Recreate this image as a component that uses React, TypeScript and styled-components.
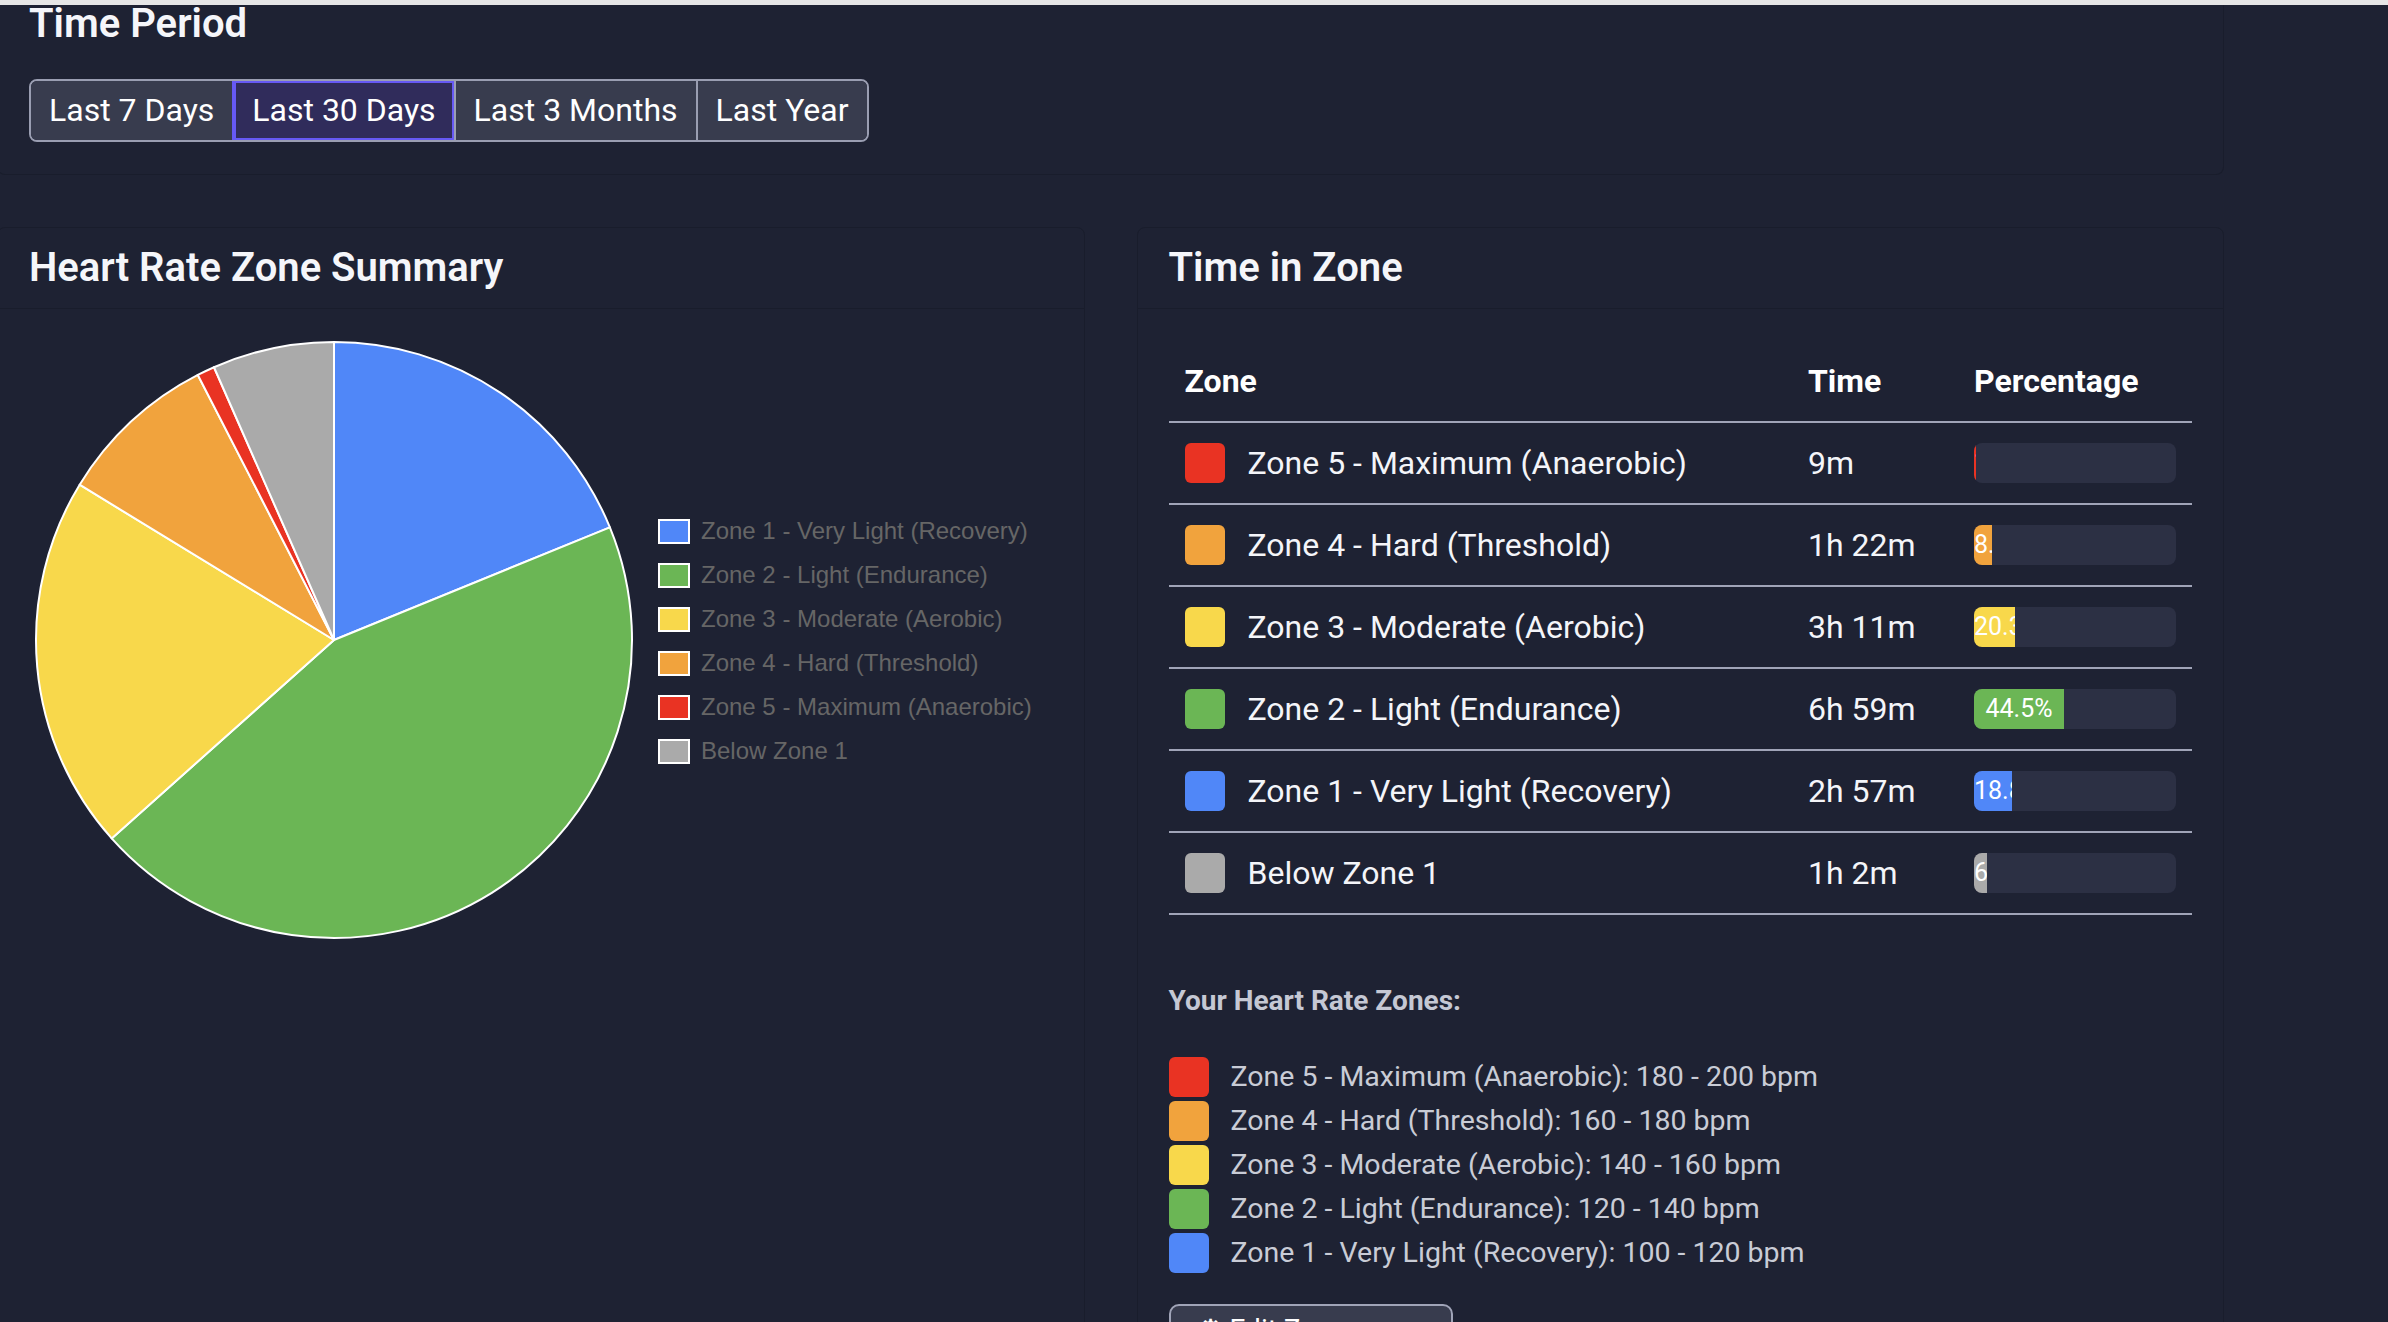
import React from "react";
import styled, { createGlobalStyle } from "styled-components";

const GlobalStyle = createGlobalStyle`
  html, body {
    margin: 0;
    padding: 0;
    overflow: hidden;
    background: #1e2233;
  }
  body {
    font-family: Roboto, Inter, "Liberation Sans", sans-serif;
    color: #f4f5f9;
  }
  * { box-sizing: border-box; }
`;

type Zone = {
  key: string;
  name: string;
  color: string;
  minutes: number;
  time: string;
  pct: string;
  range: string;
};

const ZONES: Zone[] = [
  { key: "z5", name: "Zone 5 - Maximum (Anaerobic)", color: "#e93323", minutes: 9, time: "9m", pct: "1.0%", range: "180 - 200 bpm" },
  { key: "z4", name: "Zone 4 - Hard (Threshold)", color: "#f1a33d", minutes: 82, time: "1h 22m", pct: "8.7%", range: "160 - 180 bpm" },
  { key: "z3", name: "Zone 3 - Moderate (Aerobic)", color: "#f8d84b", minutes: 191, time: "3h 11m", pct: "20.3%", range: "140 - 160 bpm" },
  { key: "z2", name: "Zone 2 - Light (Endurance)", color: "#6bb655", minutes: 419, time: "6h 59m", pct: "44.5%", range: "120 - 140 bpm" },
  { key: "z1", name: "Zone 1 - Very Light (Recovery)", color: "#5087f8", minutes: 177, time: "2h 57m", pct: "18.8%", range: "100 - 120 bpm" },
  { key: "z0", name: "Below Zone 1", color: "#aaaaaa", minutes: 62, time: "1h 2m", pct: "6.6%", range: "" },
];

const TOTAL = ZONES.reduce((s, z) => s + z.minutes, 0);
const byKey = (k: string) => ZONES.find((z) => z.key === k)!;
const PIE_ORDER = ["z1", "z2", "z3", "z4", "z5", "z0"].map(byKey);

const TopStrip = styled.div`
  height: 5px;
  background: #e6e6e6;
`;

const Page = styled.div`
  width: 2227px;
  margin-left: -3px;
  display: flex;
  flex-direction: column;
  gap: 52px;
`;

const Card = styled.section`
  border: 1px solid #191d2c;
  border-radius: 8px;
  background: #1e2233;
`;

const PeriodCard = styled(Card)`
  border-top: none;
  border-radius: 0 0 8px 8px;
  padding: 0 31px 32px;
`;

const Heading = styled.h2`
  margin: 0;
  font-size: 40px;
  font-weight: 600;
  line-height: 38px;
  color: #f5f6fa;
`;

const ButtonGroup = styled.div`
  margin-top: 36px;
  display: inline-flex;
  border: 2px solid #9a9eb2;
  border-radius: 8px;
  overflow: hidden;
`;

const PeriodButton = styled.button<{ $active?: boolean }>`
  font-family: inherit;
  font-size: 32px;
  line-height: 40px;
  color: #ffffff;
  padding: 9px 18px 10px;
  margin: 0;
  background: ${(p) => (p.$active ? "#302c5b" : "#383c4e")};
  border: none;
  border-left: 2px solid ${(p) => (p.$active ? "#6659f4" : "#9a9eb2")};
  box-shadow: ${(p) => (p.$active ? "inset 0 0 0 2px #6659f4" : "none")};
  &:first-child {
    border-left: none;
  }
`;

const Grid = styled.div`
  display: grid;
  grid-template-columns: 1fr 1fr;
  gap: 52px;
`;

const CardHeader = styled.header`
  padding: 16px 31px;
  border-bottom: 1px solid #191d2c;
`;

const CardTitle = styled.h2`
  margin: 0;
  font-size: 40px;
  font-weight: 600;
  line-height: 48px;
  color: #f5f6fa;
`;

const ChartBody = styled.div`
  padding: 32px 31px;
  display: flex;
  align-items: center;
`;

const Legend = styled.ul`
  list-style: none;
  margin: 0 0 0 19px;
  padding: 0;
  display: flex;
  flex-direction: column;
  gap: 19px;
  font-family: "Liberation Sans", Arial, Helvetica, sans-serif;
  font-size: 24px;
  color: #666666;
`;

const LegendItem = styled.li`
  display: flex;
  align-items: center;
  gap: 11px;
  height: 25px;
`;

const LegendBox = styled.span<{ $color: string }>`
  width: 32px;
  height: 25px;
  background: ${(p) => p.$color};
  border: 2px solid #ffffff;
`;

const TableBody = styled.div`
  padding: 32px 31px 32px;
`;

const Table = styled.table`
  width: 100%;
  border-collapse: collapse;
`;

const Th = styled.th<{ $w?: number }>`
  text-align: left;
  font-size: 32px;
  font-weight: 700;
  line-height: 48px;
  padding: 16px;
  color: #ffffff;
  border-bottom: 2px solid #a0a4b8;
  width: ${(p) => (p.$w ? `${p.$w}px` : "auto")};
`;

const Td = styled.td`
  font-size: 32px;
  line-height: 48px;
  padding: 16px;
  color: #f4f5f9;
  border-bottom: 2px solid #a0a4b8;
  white-space: nowrap;
`;

const ZoneLabel = styled.div`
  display: flex;
  align-items: center;
  gap: 23px;
`;

const Swatch = styled.span<{ $color: string }>`
  flex: none;
  width: 40px;
  height: 40px;
  border-radius: 6px;
  background: ${(p) => p.$color};
`;

const Track = styled.div`
  width: 202px;
  height: 40px;
  border-radius: 8px;
  background: #2c3044;
  overflow: hidden;
`;

const Fill = styled.div<{ $color: string }>`
  height: 100%;
  background: ${(p) => p.$color};
  color: #ffffff;
  font-size: 25px;
  line-height: 40px;
  text-align: center;
  white-space: nowrap;
  overflow: hidden;
`;

const ZonesHeading = styled.h4`
  margin: 69px 0 0;
  font-size: 28px;
  font-weight: 700;
  line-height: 34px;
  color: #c5c8d4;
`;

const ZoneList = styled.ul`
  list-style: none;
  margin: 39px 0 0;
  padding: 0;
  display: flex;
  flex-direction: column;
  gap: 4px;
`;

const ZoneRow = styled.li`
  display: flex;
  align-items: center;
  gap: 22px;
  font-size: 28.5px;
  line-height: 40px;
  color: #c9ccd6;
`;

const ActionButton = styled.button`
  margin-top: 31px;
  width: 284px;
  font-family: inherit;
  font-size: 28px;
  line-height: 34px;
  text-align: left;
  color: #ffffff;
  padding: 7px 27px 12px;
  background: #383c4e;
  border: 2px solid #a0a4b8;
  border-radius: 10px;
`;

function PieChart() {
  const cx = 305;
  const cy = 299;
  const r = 298;
  let acc = 0;
  const slices = PIE_ORDER.map((z) => {
    const start = (acc / TOTAL) * Math.PI * 2 - Math.PI / 2;
    acc += z.minutes;
    const end = (acc / TOTAL) * Math.PI * 2 - Math.PI / 2;
    const x1 = cx + r * Math.cos(start);
    const y1 = cy + r * Math.sin(start);
    const x2 = cx + r * Math.cos(end);
    const y2 = cy + r * Math.sin(end);
    const large = end - start > Math.PI ? 1 : 0;
    const d = `M ${cx} ${cy} L ${x1} ${y1} A ${r} ${r} 0 ${large} 1 ${x2} ${y2} Z`;
    return <path key={z.key} d={d} fill={z.color} stroke="#ffffff" strokeWidth={2} strokeLinejoin="round" />;
  });
  return (
    <svg width={610} height={600} viewBox="0 0 610 600">
      {slices}
    </svg>
  );
}

export default function App() {
  const periods = ["Last 7 Days", "Last 30 Days", "Last 3 Months", "Last Year"];
  return (
    <>
      <GlobalStyle />
      <TopStrip />
      <Page>
        <PeriodCard>
          <Heading>Time Period</Heading>
          <ButtonGroup>
            {periods.map((p) => (
              <PeriodButton key={p} $active={p === "Last 30 Days"}>
                {p}
              </PeriodButton>
            ))}
          </ButtonGroup>
        </PeriodCard>
        <Grid>
          <Card>
            <CardHeader>
              <CardTitle>Heart Rate Zone Summary</CardTitle>
            </CardHeader>
            <ChartBody>
              <PieChart />
              <Legend>
                {PIE_ORDER.map((z) => (
                  <LegendItem key={z.key}>
                    <LegendBox $color={z.color} />
                    {z.name}
                  </LegendItem>
                ))}
              </Legend>
            </ChartBody>
          </Card>
          <Card>
            <CardHeader>
              <CardTitle>Time in Zone</CardTitle>
            </CardHeader>
            <TableBody>
              <Table>
                <thead>
                  <tr>
                    <Th>Zone</Th>
                    <Th $w={166}>Time</Th>
                    <Th $w={234}>Percentage</Th>
                  </tr>
                </thead>
                <tbody>
                  {ZONES.map((z) => (
                    <tr key={z.key}>
                      <Td>
                        <ZoneLabel>
                          <Swatch $color={z.color} />
                          {z.name}
                        </ZoneLabel>
                      </Td>
                      <Td>{z.time}</Td>
                      <Td>
                        <Track>
                          <Fill $color={z.color} style={{ width: `${(z.minutes / TOTAL) * 100}%` }}>
                            {z.pct}
                          </Fill>
                        </Track>
                      </Td>
                    </tr>
                  ))}
                </tbody>
              </Table>
              <ZonesHeading>Your Heart Rate Zones:</ZonesHeading>
              <ZoneList>
                {ZONES.filter((z) => z.range).map((z) => (
                  <ZoneRow key={z.key}>
                    <Swatch $color={z.color} />
                    {z.name}: {z.range}
                  </ZoneRow>
                ))}
              </ZoneList>
              <ActionButton>⚙ Edit Zones</ActionButton>
            </TableBody>
          </Card>
        </Grid>
      </Page>
    </>
  );
}
